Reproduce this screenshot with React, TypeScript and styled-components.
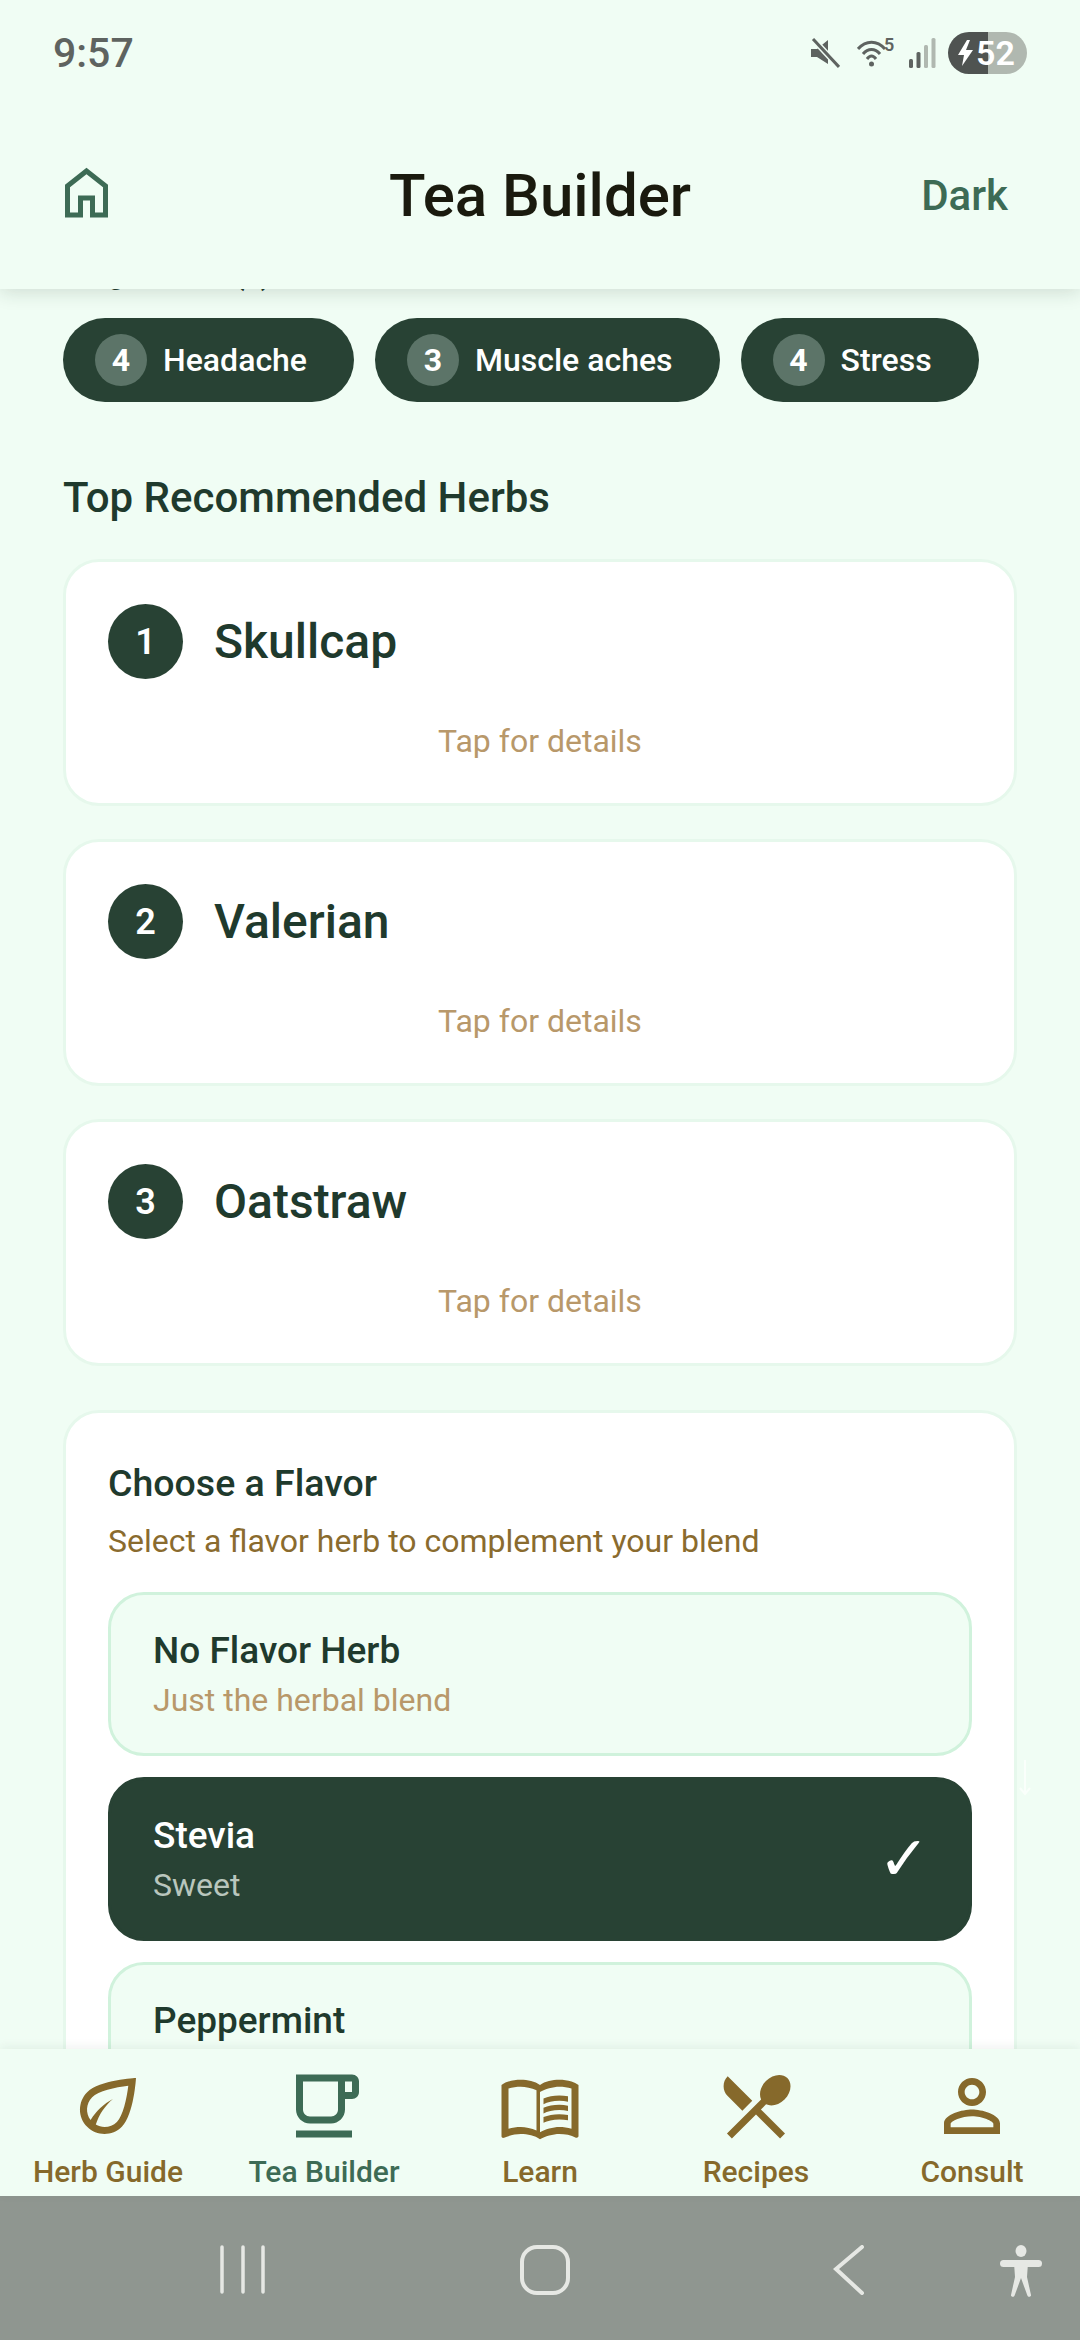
import React from "react";
import styled, { createGlobalStyle } from "styled-components";

const Global = createGlobalStyle`
  html, body { margin: 0; padding: 0; background: #f0fdf4; }
  * { box-sizing: border-box; }
  body { font-family: Roboto, "Liberation Sans", sans-serif; }
`;

const Screen = styled.div`
  width: 1080px;
  height: 2340px;
  display: flex;
  flex-direction: column;
  background: #f0fdf4;
  overflow: hidden;
  position: relative;
`;

const Header = styled.header`
  height: 289px;
  flex: none;
  background: #f0fdf4;
  box-shadow: 0 3px 18px rgba(30, 50, 40, 0.16);
  position: relative;
  z-index: 2;
  display: flex;
  flex-direction: column;
`;

const StatusBar = styled.div`
  height: 106px;
  flex: none;
  display: flex;
  align-items: flex-start;
  justify-content: space-between;
  padding: 32px 53px 0 53px;
`;

const Time = styled.div`
  font-size: 41px;
  line-height: 42px;
  font-weight: 500;
  color: #5e6360;
`;

const StatusIcons = styled.div`
  display: flex;
  align-items: center;
  height: 42px;
`;

const StatusGlyph = styled.svg<{ $gap: number }>`
  display: block;
  margin-right: ${(p) => p.$gap}px;
`;

const Battery = styled.div`
  width: 79px;
  height: 42px;
  border-radius: 21px;
  background: linear-gradient(90deg, #4f5351 0 40px, #b0b8b0 40px 100%);
  display: flex;
  align-items: center;
  padding-left: 10px;
  gap: 3px;
  color: #ffffff;
  font-size: 34px;
  font-weight: 600;
`;

const AppBar = styled.div`
  flex: 1;
  display: grid;
  grid-template-columns: 1fr auto 1fr;
  align-items: center;
  padding: 0 72px 4px 60px;
`;

const HomeIcon = styled.svg`
  display: block;
  fill: none;
  stroke: #3d6b55;
  stroke-width: 5;
  margin-bottom: 5px;
`;

const Title = styled.h1`
  margin: 0 0 0 12px;
  font-size: 60px;
  line-height: 66px;
  font-weight: 500;
  color: #1a1a0e;
`;

const DarkToggle = styled.div`
  justify-self: end;
  font-size: 42px;
  font-weight: 500;
  color: #3d6b55;
`;

const Content = styled.main`
  flex: 1;
  min-height: 0;
  overflow: hidden;
`;

const Scroller = styled.div`
  margin-top: -35px;
  padding: 0 63px;
`;

const HiddenLabel = styled.div`
  font-size: 31px;
  line-height: 40px;
  font-weight: 500;
  color: #1f3a2d;
  margin-bottom: 24px;
`;

const ChipRow = styled.div`
  display: flex;
  gap: 21px;
  margin-bottom: 72px;
`;

const Chip = styled.div`
  height: 84px;
  border-radius: 42px;
  background: #284234;
  display: flex;
  align-items: center;
  gap: 16px;
  padding: 0 47px 0 32px;
  color: #ffffff;
  font-size: 32px;
  font-weight: 500;
`;

const ChipBadge = styled.span`
  width: 52px;
  height: 52px;
  border-radius: 50%;
  background: #5c7468;
  display: flex;
  align-items: center;
  justify-content: center;
  font-size: 32px;
  font-weight: 700;
`;

const SectionTitle = styled.h2`
  margin: 0 0 37px;
  font-size: 42px;
  line-height: 48px;
  font-weight: 500;
  color: #1f3a2d;
`;

const HerbList = styled.div`
  display: flex;
  flex-direction: column;
  gap: 33px;
  margin-bottom: 44px;
`;

const HerbCard = styled.div`
  height: 247px;
  background: #ffffff;
  border: 3px solid #e6f8ec;
  border-radius: 36px;
  padding: 42px;
  display: flex;
  flex-direction: column;
`;

const HerbRow = styled.div`
  display: flex;
  align-items: center;
  gap: 31px;
`;

const Rank = styled.span`
  width: 75px;
  height: 75px;
  border-radius: 50%;
  background: #284234;
  color: #ffffff;
  display: flex;
  align-items: center;
  justify-content: center;
  font-size: 36px;
  font-weight: 600;
`;

const HerbName = styled.div`
  font-size: 48px;
  font-weight: 500;
  color: #1f3a2d;
`;

const TapHint = styled.div`
  margin-top: 42px;
  text-align: center;
  font-size: 32px;
  line-height: 40px;
  color: #b8986a;
`;

const FlavorCard = styled.section`
  background: #ffffff;
  border: 3px solid #e6f8ec;
  border-radius: 36px;
  padding: 48px 42px;
`;

const FlavorTitle = styled.h3`
  margin: 0 0 16px;
  font-size: 37.5px;
  line-height: 44px;
  font-weight: 500;
  color: #1f3a2d;
`;

const FlavorSub = styled.p`
  margin: 0 0 31px;
  font-size: 32px;
  line-height: 40px;
  color: #8a6b2e;
`;

const OptionList = styled.div`
  display: flex;
  flex-direction: column;
  gap: 21px;
`;

const Option = styled.div<{ $active?: boolean }>`
  height: 164px;
  border-radius: 36px;
  border: 3px solid ${(p) => (p.$active ? "#284234" : "#d0f2dc")};
  background: ${(p) => (p.$active ? "#284234" : "#f0fdf4")};
  padding: 0 39px 0 42px;
  display: flex;
  align-items: center;
  justify-content: space-between;
`;

const OptionText = styled.div`
  display: flex;
  flex-direction: column;
  gap: 8px;
`;

const OptionName = styled.div<{ $active?: boolean }>`
  font-size: 37px;
  line-height: 44px;
  font-weight: 500;
  color: ${(p) => (p.$active ? "#ffffff" : "#1f3a2d")};
`;

const OptionNote = styled.div<{ $active?: boolean }>`
  font-size: 32px;
  line-height: 38px;
  color: ${(p) => (p.$active ? "#b9c6bd" : "#b8986a")};
`;

const Check = styled.span`
  font-family: "DejaVu Sans", sans-serif;
  font-size: 62px;
  font-weight: 700;
  line-height: 66px;
  color: #ffffff;
`;

const ScrollHint = styled.svg`
  position: absolute;
  left: 1017px;
  top: 1760px;
  z-index: 1;
`;

const TabBar = styled.nav`
  height: 147px;
  flex: none;
  position: relative;
  z-index: 2;
  background: #f0fdf4;
  box-shadow: 0 -2px 10px rgba(30, 50, 40, 0.07);
  display: grid;
  grid-template-columns: repeat(5, 216px);
  padding-top: 15px;
`;

const Tab = styled.div<{ $active?: boolean }>`
  display: flex;
  flex-direction: column;
  align-items: center;
  color: ${(p) => (p.$active ? "#3d6b55" : "#86692b")};
  font-size: 30px;
  line-height: 36px;
  font-weight: 500;
`;

const TabIcon = styled.svg`
  display: block;
  width: 84px;
  height: 84px;
  fill: currentColor;
  fill-rule: evenodd;
  margin-bottom: 6px;
`;

const NavBar = styled.div`
  height: 144px;
  flex: none;
  background: #8f9690;
  position: relative;
  display: flex;
  align-items: flex-start;
  padding: 49px 0 0 219px;
`;

const NavGlyph = styled.svg<{ $left: number }>`
  display: block;
  margin-right: ${(p) => p.$left}px;
  fill: none;
  stroke: #e6e8e4;
  stroke-linecap: round;
`;

const tabs = [
  {
    label: "Herb Guide",
    d: "M6.05 8.05c-2.73 2.73-2.73 7.17 0 9.9C7.42 19.32 9.21 20 11 20s3.58-.68 4.95-2.05C19.43 14.47 20 4 20 4S9.53 4.57 6.05 8.05zm8.49 8.49c-.95.94-2.2 1.46-3.54 1.46-.89 0-1.73-.25-2.48-.68.92-2.88 2.62-5.41 4.88-7.32-2.63 1.36-4.84 3.46-6.37 6.03-1.48-1.96-1.35-4.75.44-6.54C9.21 7.72 14.04 6.65 17.8 6.2c-.45 3.76-1.52 8.59-3.26 10.34z",
  },
  {
    label: "Tea Builder",
    active: true,
    d: "M20 3H4v10c0 2.21 1.79 4 4 4h6c2.21 0 4-1.79 4-4v-3h2c1.11 0 2-.9 2-2V5c0-1.11-.89-2-2-2zm-4 10c0 1.1-.9 2-2 2H8c-1.1 0-2-.9-2-2V5h10v8zm4-5h-2V5h2v3zM4 19h16v2H4z",
  },
  {
    label: "Learn",
    d: "M21 5c-1.11-.35-2.33-.5-3.5-.5-1.95 0-4.05.4-5.5 1.5-1.45-1.1-3.55-1.5-5.5-1.5S2.45 4.9 1 6v14.65c0 .25.25.5.5.5.1 0 .15-.05.25-.05C3.1 20.45 5.05 20 6.5 20c1.95 0 4.05.4 5.5 1.5 1.35-.85 3.8-1.5 5.5-1.5 1.65 0 3.35.3 4.75 1.05.1.05.15.05.25.05.25 0 .5-.25.5-.5V6c-.6-.45-1.25-.75-2-1zm0 13.5c-1.1-.35-2.3-.5-3.5-.5-1.7 0-4.15.65-5.5 1.5V8c1.35-.85 3.8-1.5 5.5-1.5 1.2 0 2.4.15 3.5.5v11.500zM3 18.500V7c1.1-.35 2.3-.5 3.5-.5 1.34 0 3.13.41 4.5.99v11.500C9.630 18.410 7.840 18 6.500 18c-1.200 0-2.400.15-3.500.5zM17.500 10.500c.88 0 1.730.09 2.500.26V9.240c-.79-.15-1.640-.24-2.500-.24-1.700 0-3.240.29-4.500.83v1.660c1.130-.64 2.700-.99 4.500-.99zM13 12.490v1.660c1.130-.64 2.700-.99 4.500-.99.88 0 1.730.09 2.500.26V11.900c-.79-.15-1.640-.24-2.500-.24-1.700 0-3.240.3-4.500.83zM17.500 14.330c-1.700 0-3.240.29-4.500.83v1.660c1.130-.64 2.700-.99 4.500-.99.88 0 1.730.09 2.500.26v-1.520c-.79-.16-1.640-.24-2.500-.24z",
  },
  {
    label: "Recipes",
    d: "M8.1 13.34l2.83-2.83L3.91 3.5c-1.56 1.56-1.56 4.09 0 5.66l4.19 4.18zm6.78-1.81c1.53.71 3.68.21 5.27-1.38 1.91-1.91 2.28-4.65.81-6.12-1.46-1.46-4.2-1.1-6.12.81-1.59 1.59-2.09 3.74-1.38 5.27L3.7 19.87l1.41 1.41L12 14.41l6.88 6.88 1.41-1.41L13.41 13l1.47-1.47z",
  },
  {
    label: "Consult",
    d: "M12 5.9c1.16 0 2.1.94 2.1 2.1s-.94 2.1-2.1 2.1S9.9 9.16 9.9 8s.94-2.1 2.1-2.1m0 9c2.97 0 6.1 1.46 6.1 2.1v1.1H5.9V17c0-.64 3.13-2.1 6.1-2.1M12 4C9.79 4 8 5.79 8 8s1.79 4 4 4 4-1.79 4-4-1.79-4-4-4zm0 9c-2.67 0-8 1.34-8 4v3h16v-3c0-2.66-5.33-4-8-4z",
  },
];

const chips = [
  { n: 4, label: "Headache" },
  { n: 3, label: "Muscle aches" },
  { n: 4, label: "Stress" },
];

const herbs = ["Skullcap", "Valerian", "Oatstraw"];

const options = [
  { name: "No Flavor Herb", note: "Just the herbal blend" },
  { name: "Stevia", note: "Sweet", active: true },
  { name: "Peppermint", note: "Cool and refreshing" },
];

export default function App() {
  return (
    <Screen>
      <Global />
      <Header>
        <StatusBar>
          <Time>9:57</Time>
          <StatusIcons>
            <StatusGlyph $gap={17} width="29" height="30" viewBox="0 0 29 30">
              <path d="M0 11h6L17 2v24L6 19H0z" fill="#5e6360" />
              <path d="M2 1l26 28" stroke="#f0fdf4" strokeWidth="6" />
              <path d="M2 1l26 28" stroke="#5e6360" strokeWidth="3" />
            </StatusGlyph>
            <StatusGlyph $gap={15} width="37" height="30" viewBox="0 0 37 30">
              <g fill="none" stroke="#5e6360" strokeWidth="3">
                <path d="M1 11 C9 2 20 2 28 11" />
                <path d="M6 16 C11 10 18 10 23 16" />
                <path d="M10 21 C13 17 16 17 19 21" />
              </g>
              <circle cx="14.5" cy="26" r="2.5" fill="#5e6360" />
              <text x="27" y="13" fontSize="18" fontWeight="600" fill="#5e6360" fontFamily="Roboto, sans-serif">5</text>
            </StatusGlyph>
            <StatusGlyph $gap={12} width="27" height="30" viewBox="0 0 27 30">
              <rect x="0" y="21" width="4" height="9" rx="1.5" fill="#5e6360" />
              <rect x="7.5" y="14" width="4" height="16" rx="1.5" fill="#5e6360" />
              <rect x="15" y="7" width="4" height="23" rx="1.5" fill="#b0b8b0" />
              <rect x="22.5" y="0" width="4" height="30" rx="1.5" fill="#b0b8b0" />
            </StatusGlyph>
            <Battery>
              <svg width="15" height="26" viewBox="0 0 15 26">
                <path d="M9 0L0 15h6l-2 11 11-16H8l4-10z" fill="#ffffff" />
              </svg>
              52
            </Battery>
          </StatusIcons>
        </StatusBar>
        <AppBar>
          <HomeIcon width="56" height="56" viewBox="0 0 56 56">
            <path d="M26.5 6L45.500 21V50H32.500V33H20.500V50H7.500V21Z" />
          </HomeIcon>
          <Title>Tea Builder</Title>
          <DarkToggle>Dark</DarkToggle>
        </AppBar>
      </Header>
      <Content>
        <Scroller>
          <HiddenLabel>Target Issue(s)</HiddenLabel>
          <ChipRow>
            {chips.map((c) => (
              <Chip key={c.label}>
                <ChipBadge>{c.n}</ChipBadge>
                {c.label}
              </Chip>
            ))}
          </ChipRow>
          <SectionTitle>Top Recommended Herbs</SectionTitle>
          <HerbList>
            {herbs.map((h, i) => (
              <HerbCard key={h}>
                <HerbRow>
                  <Rank>{i + 1}</Rank>
                  <HerbName>{h}</HerbName>
                </HerbRow>
                <TapHint>Tap for details</TapHint>
              </HerbCard>
            ))}
          </HerbList>
          <FlavorCard>
            <FlavorTitle>Choose a Flavor</FlavorTitle>
            <FlavorSub>Select a flavor herb to complement your blend</FlavorSub>
            <OptionList>
              {options.map((o) => (
                <Option key={o.name} $active={o.active}>
                  <OptionText>
                    <OptionName $active={o.active}>{o.name}</OptionName>
                    <OptionNote $active={o.active}>{o.note}</OptionNote>
                  </OptionText>
                  {o.active && <Check>✓</Check>}
                </Option>
              ))}
            </OptionList>
          </FlavorCard>
        </Scroller>
      </Content>
      <ScrollHint width="16" height="36" viewBox="0 0 16 36" fill="none" stroke="#fafffb" strokeWidth="2">
        <path d="M8 0V34M3 28l5 6 5-6" />
      </ScrollHint>
      <TabBar>
        {tabs.map((t) => (
          <Tab key={t.label} $active={t.active}>
            <TabIcon viewBox="0 0 24 24">
              <path d={t.d} />
            </TabIcon>
            {t.label}
          </Tab>
        ))}
      </TabBar>
      <NavBar>
        <NavGlyph $left={252} width="48" height="50" viewBox="0 0 48 50" strokeWidth="3.5">
          <path d="M3 2V47M24 2V47M44 2V47" />
        </NavGlyph>
        <NavGlyph $left={262} width="52" height="50" viewBox="0 0 52 50" strokeWidth="4">
          <rect x="3" y="2" width="46" height="46" rx="15" />
        </NavGlyph>
        <NavGlyph $left={135} width="32" height="50" viewBox="0 0 32 50" strokeWidth="4">
          <path d="M29 2L3 24L29 48" />
        </NavGlyph>
        <svg width="42" height="52" viewBox="0 0 42 52" fill="#e6e8e4">
          <ellipse cx="21" cy="6" rx="5.5" ry="6" />
          <rect x="0" y="15" width="42" height="7" rx="3.5" />
          <path d="M14 18h14l-1 14 4 18c.4 2-3 2.600-3.600.6L21 33l-6.400 17.600c-.6 2-4 1.400-3.600-.6l4-18z" />
        </svg>
      </NavBar>
    </Screen>
  );
}
